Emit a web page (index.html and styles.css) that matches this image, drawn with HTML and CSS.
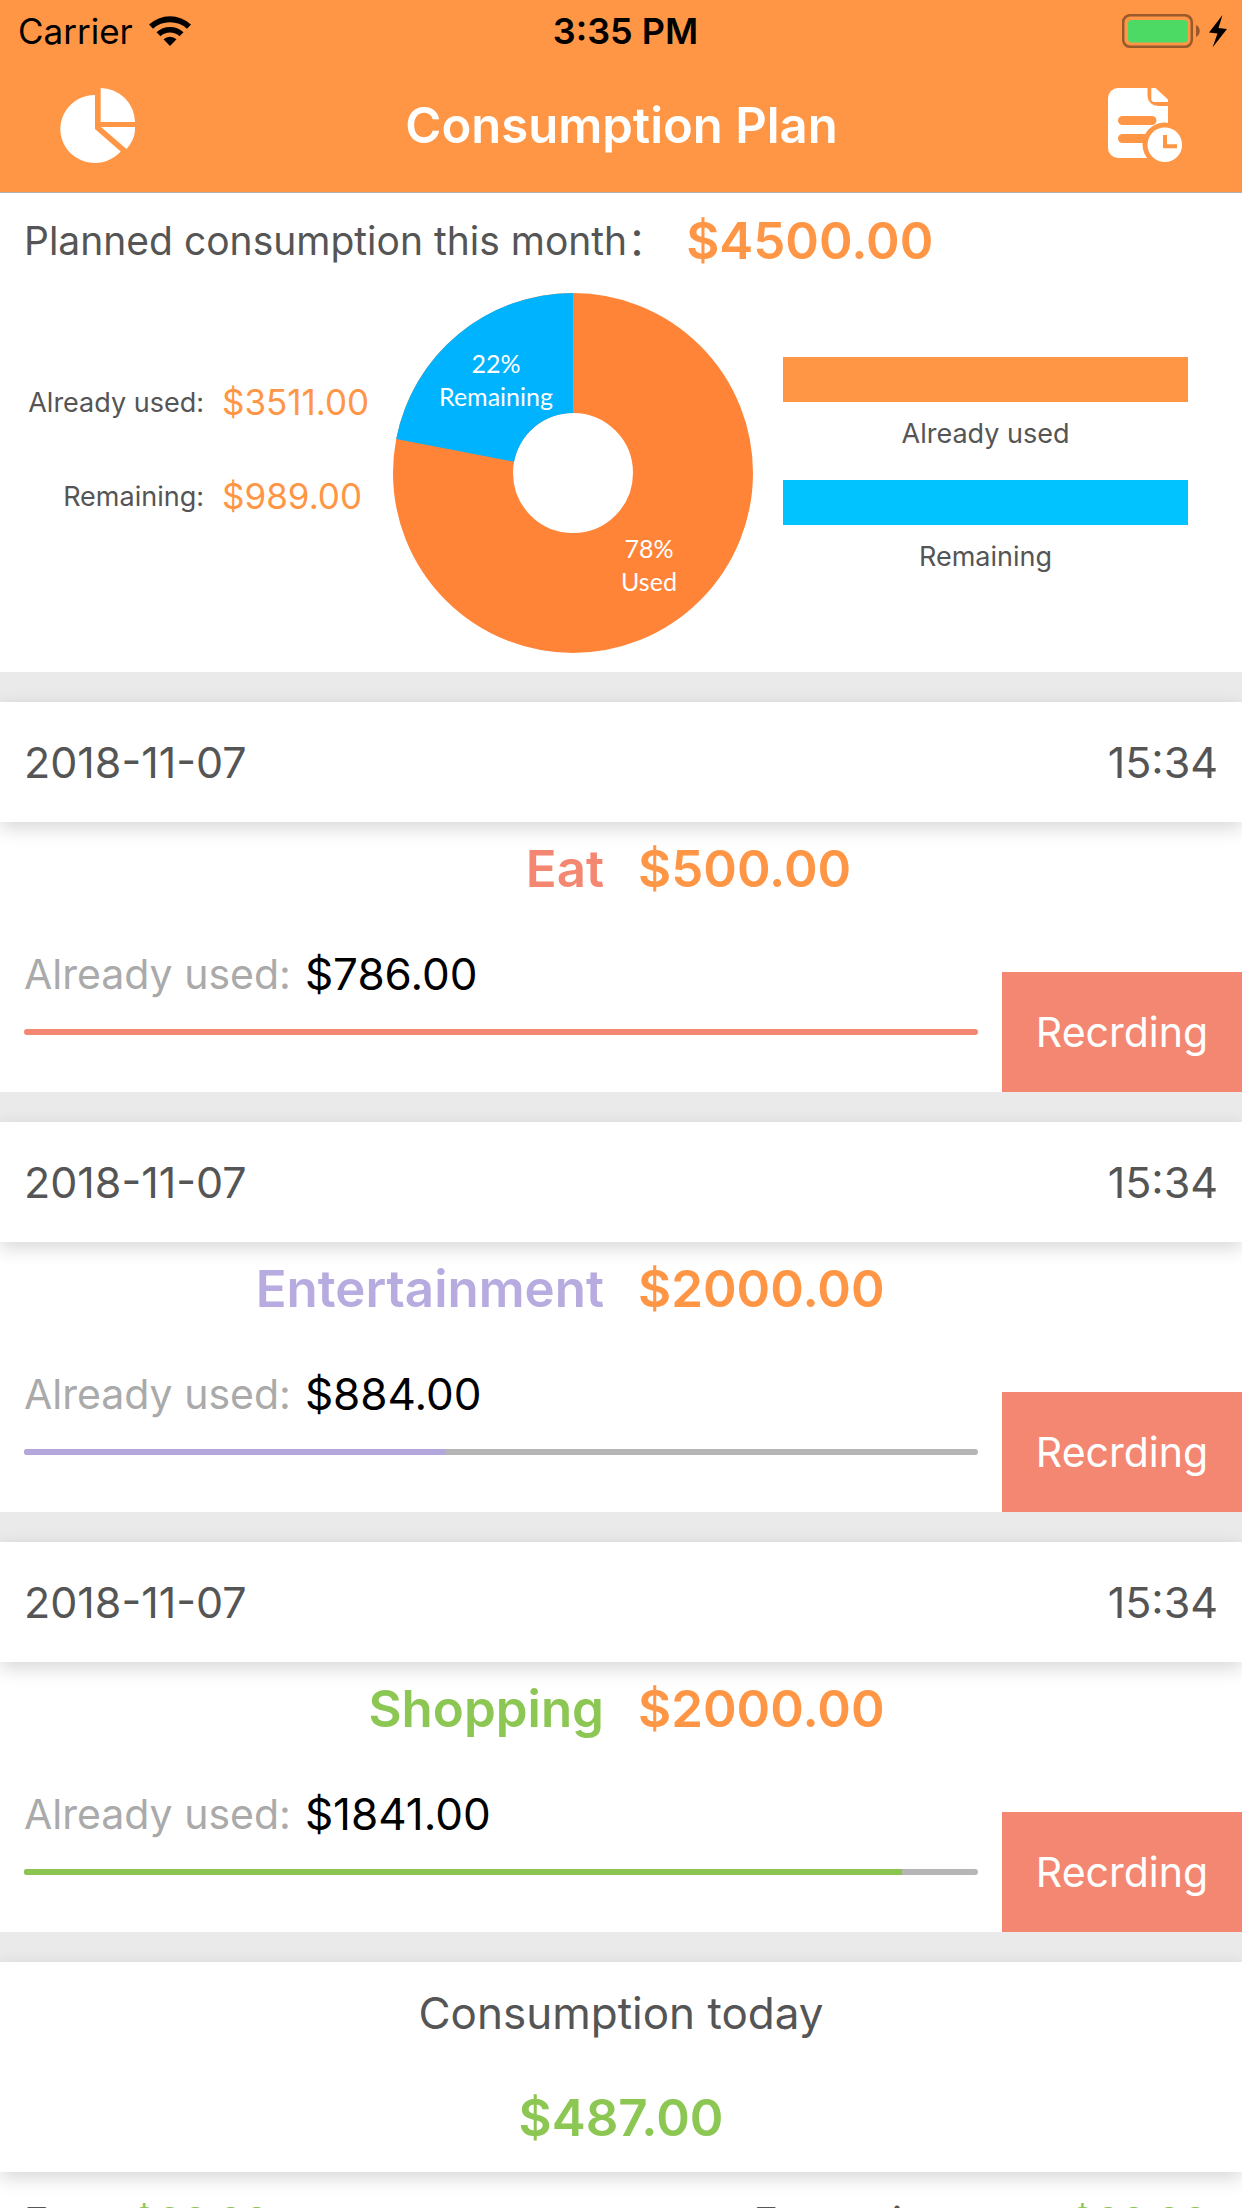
FILE: index.html
```html
<!DOCTYPE html>
<html lang="en">
<head>
<meta charset="utf-8">
<meta name="viewport" content="width=device-width, initial-scale=1">
<title>Consumption Plan</title>
<link rel="stylesheet" href="styles.css">
</head>
<body>
<div class="app">
  <header class="header">
    <div class="status">
      <div class="status-left">
        <span>Carrier</span>
        <svg class="wifi" viewBox="150 15 42 30" width="42" height="30" aria-hidden="true">
          <path d="M150 23.500A31 31 0 0 1 192 23.500L188 27.800A25 25 0 0 0 154 27.800Z"/>
          <path d="M157.500 31.200A20 20 0 0 1 184.500 31.200L180.500 35.200A14 14 0 0 0 161.500 35.200Z"/>
          <path d="M164.500 38.300A9.500 9.500 0 0 1 177.500 38.300L171 45Z"/>
        </svg>
      </div>
      <span class="clock">3:35 PM</span>
      <svg class="battery" viewBox="82 13 105 34" width="105" height="34" aria-hidden="true">
        <rect x="83.200" y="14.200" width="68.600" height="31.600" rx="7" fill="none" stroke="#99592a" stroke-width="2.500"/>
        <rect x="88" y="19" width="59.500" height="22.500" rx="3.500" fill="#4cd964"/>
        <path d="M156 24C161 26 161 34 156 36Z" fill="#99592a"/>
        <path d="M182.500 14L169 31.500L177.500 32.500L172.500 46.500L187 28L178.500 27Z"/>
      </svg>
    </div>
    <nav class="nav">
      <button class="icon-button" type="button" aria-label="Statistics">
        <svg viewBox="60 88 75 75" width="75" height="75" fill="#fff" aria-hidden="true">
          <path d="M95 95A34.500 34 0 1 0 120.700 151.500L95 129Z"/>
          <path d="M100.700 88A34.500 34.500 0 0 1 135 122H100.700Z"/>
          <path d="M101 127H135.200A32 32 0 0 1 126.500 149Z"/>
        </svg>
      </button>
      <h1 class="title">Consumption Plan</h1>
      <button class="icon-button" type="button" aria-label="History">
        <svg viewBox="68 88 75 75" width="75" height="75" aria-hidden="true">
          <path fill="#fff" d="M78 88H107.500V95.500A10.500 10.500 0 0 0 118 106H128V158H78A10 10 0 0 1 68 148V98A10 10 0 0 1 78 88Z"/>
          <path fill="#fff" d="M111.300 88H115.500L128 99.500V102H114.500A3.200 3.200 0 0 1 111.300 98.800Z"/>
          <path class="icon-cut" d="M82.500 120.500H112M82.500 138.500H122" stroke-width="9" stroke-linecap="round"/>
          <circle cx="124.500" cy="144.500" r="22" fill="#ff9645"/>
          <circle cx="124.800" cy="144.800" r="17.300" fill="#fff"/>
          <path class="icon-cut" d="M125 135V146.200H137" stroke-width="4"/>
        </svg>
      </button>
    </nav>
  </header>

  <main class="content">
    <section class="summary">
      <p class="planned"><span>Planned consumption this month：</span><strong>$4500.00</strong></p>
      <div class="overview">
        <dl class="totals">
          <dt>Already used:</dt><dd>$3511.00</dd>
          <dt>Remaining:</dt><dd>$989.00</dd>
        </dl>
        <svg class="donut" viewBox="-180 -180 360 360" role="img" aria-label="Used and remaining share">
          <circle r="120" fill="none" stroke="#ff8437" stroke-width="120"/>
          <path d="M0 -180A180 180 0 0 0 -176.800 -34L-58.900 -11.300A60 60 0 0 1 0 -60Z" fill="#00b3ff"/>
          <text x="-77" y="-100">22%</text>
          <text x="-77" y="-67">Remaining</text>
          <text x="76" y="85">78%</text>
          <text x="76" y="118">Used</text>
        </svg>
        <div class="legend">
          <div class="swatch swatch-used"></div>
          <p>Already used</p>
          <div class="swatch swatch-left"></div>
          <p>Remaining</p>
        </div>
      </div>
    </section>

    <section class="card eat">
      <div class="card-head"><span>2018-11-07</span><span>15:34</span></div>
      <div class="card-title"><h2>Eat</h2><strong>$500.00</strong></div>
      <div class="card-body">
        <div class="usage">
          <p><span class="usage-label">Already used:</span><span class="usage-value">$786.00</span></p>
          <div class="bar" role="progressbar" aria-label="Eat" aria-valuenow="100"><div class="bar-fill" style="width: 100%"></div></div>
        </div>
        <button class="record" type="button">Recrding</button>
      </div>
    </section>

    <section class="card entertainment">
      <div class="card-head"><span>2018-11-07</span><span>15:34</span></div>
      <div class="card-title"><h2>Entertainment</h2><strong>$2000.00</strong></div>
      <div class="card-body">
        <div class="usage">
          <p><span class="usage-label">Already used:</span><span class="usage-value">$884.00</span></p>
          <div class="bar" role="progressbar" aria-label="Entertainment" aria-valuenow="44"><div class="bar-fill" style="width: 44.2%"></div></div>
        </div>
        <button class="record" type="button">Recrding</button>
      </div>
    </section>

    <section class="card shopping">
      <div class="card-head"><span>2018-11-07</span><span>15:34</span></div>
      <div class="card-title"><h2>Shopping</h2><strong>$2000.00</strong></div>
      <div class="card-body">
        <div class="usage">
          <p><span class="usage-label">Already used:</span><span class="usage-value">$1841.00</span></p>
          <div class="bar" role="progressbar" aria-label="Shopping" aria-valuenow="92"><div class="bar-fill" style="width: 92%"></div></div>
        </div>
        <button class="record" type="button">Recrding</button>
      </div>
    </section>

    <section class="card">
      <div class="today">
        <h2>Consumption today</h2>
        <strong>$487.00</strong>
      </div>
      <div class="today-items">
        <p><span>Eat:</span><span class="today-value">$20.00</span></p>
        <p><span>Entertainment:</span><span class="today-value">$20.00</span></p>
      </div>
    </section>
  </main>
</div>
</body>
</html>
```
FILE: styles.css
```css
* {
  box-sizing: border-box;
}

body,
h1,
h2,
p,
dl,
dd {
  margin: 0;
}

body {
  font-family: Inter, "Noto Sans CJK SC", sans-serif;
  font-size: 41px;
  color: #555;
  background: #eaeaea;
}

button {
  padding: 0;
  border: 0;
  font: inherit;
  background: none;
}

.app {
  display: flex;
  flex-direction: column;
  height: 100vh;
}

/* Header */
.header {
  flex: none;
  background: #ff9645;
  border-bottom: 1px solid #b2b2b2;
}

.status {
  display: grid;
  grid-template-columns: 1fr auto 1fr;
  align-items: center;
  height: 60px;
  padding: 1px 15px 0 18px;
  font-size: 35px;
  color: #000;
}

.status-left {
  display: flex;
  align-items: center;
  gap: 16px;
}

.clock {
  padding-left: 6px;
  font-size: 36px;
  font-weight: 600;
}

.battery {
  justify-self: end;
}

.nav {
  display: flex;
  align-items: center;
  justify-content: space-between;
  height: 132px;
  padding: 0 59px 2px 60px;
}

.icon-button {
  width: 75px;
  height: 75px;
}

.icon-button svg {
  display: block;
}

.icon-cut {
  fill: none;
  stroke: #ff9645;
}

.title {
  font-size: 49px;
  font-weight: 600;
  color: #fff;
}

/* Scrolling content */
.content {
  flex: 1;
  min-height: 0;
  overflow-y: auto;
  scrollbar-width: none;
}

.summary {
  padding-bottom: 19px;
  background: #fff;
}

.planned {
  display: flex;
  align-items: center;
  gap: 20px;
  height: 100px;
  padding: 0 24px 4px;
  font-size: 39px;
  line-height: 60px;
}

strong {
  font-size: 51px;
  font-weight: 600;
  color: #ff9645;
}

.overview {
  display: grid;
  grid-template-columns: 369px 360px 1fr;
  padding: 0 54px 0 24px;
}

.totals {
  display: grid;
  grid-template-columns: 180px 1fr;
  grid-auto-rows: 94px;
  align-items: center;
  align-content: start;
  column-gap: 18px;
  padding-top: 62px;
}

.totals dt {
  justify-self: end;
  font-size: 27px;
  white-space: nowrap;
}

.totals dd {
  font-size: 35px;
  color: #ff9645;
}

.donut {
  display: block;
  width: 360px;
  height: 360px;
}

.donut text {
  font-family: Lato, sans-serif;
  font-size: 25px;
  fill: #fff;
  text-anchor: middle;
}

.legend {
  margin-left: 30px;
  padding-top: 64px;
  font-size: 27px;
  text-align: center;
}

.legend p {
  padding-bottom: 14px;
  line-height: 64px;
}

.swatch {
  height: 45px;
}

.swatch-used {
  background: #ff9645;
}

.swatch-left {
  background: #00c3ff;
}

/* Plan cards */
.card {
  margin-top: 30px;
  background: #fff;
}

.card-head,
.today {
  background: #fff;
  box-shadow: 0 6px 18px rgba(0, 0, 0, 0.16);
}

.card-head {
  display: flex;
  align-items: center;
  justify-content: space-between;
  height: 120px;
  padding: 0 24px;
  font-size: 43px;
}

.card-title {
  display: grid;
  grid-template-columns: 1fr 1fr;
  align-items: center;
  gap: 34px;
  height: 92px;
}

.card-title h2 {
  justify-self: end;
  font-size: 51px;
  font-weight: 600;
}

.card-body {
  display: flex;
  align-items: flex-end;
  gap: 24px;
  height: 178px;
  padding-left: 24px;
}

.usage {
  flex: 1;
  align-self: flex-start;
}

.usage p {
  display: flex;
  align-items: center;
  gap: 14px;
  height: 115px;
  padding-top: 4px;
}

.usage-label {
  color: #aaa;
}

.usage-value {
  font-size: 44px;
  color: #000;
}

.bar {
  height: 6px;
  overflow: hidden;
  border-radius: 3px;
  background: #b5b5b5;
}

.bar-fill {
  height: 100%;
}

.record {
  width: 240px;
  height: 120px;
  color: #fff;
  background: #f48771;
}

.eat h2 {
  color: #f48771;
}

.eat .bar-fill {
  background: #f48771;
}

.entertainment h2 {
  color: #b7abdf;
}

.entertainment .bar-fill {
  background: #b4a7dc;
}

.shopping h2 {
  color: #8cc653;
}

.shopping .bar-fill {
  background: #8bc450;
}

/* Today */
.today {
  display: flex;
  flex-direction: column;
  align-items: center;
  height: 210px;
}

.today h2 {
  font-size: 44px;
  font-weight: 400;
  line-height: 102px;
}

.today strong {
  line-height: 108px;
  color: #8cc653;
}

.today-items {
  display: flex;
  justify-content: space-between;
  padding: 24px 34px 24px 24px;
  line-height: 52px;
}

.today-items p {
  display: flex;
  gap: 34px;
}

.today-value {
  color: #8cc653;
}
```
